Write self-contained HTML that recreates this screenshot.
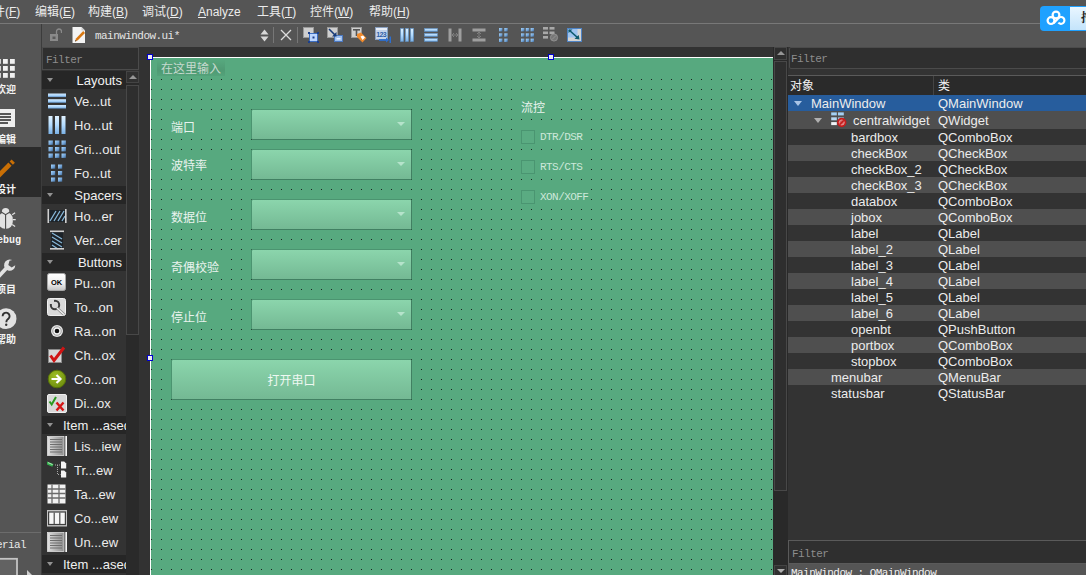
<!DOCTYPE html>
<html lang="zh-CN">
<head>
<meta charset="utf-8">
<title>mainwindow.ui - Qt Creator</title>
<style>
*{box-sizing:border-box;margin:0;padding:0}
html,body{width:1086px;height:575px;overflow:hidden;background:#333}
body{position:relative;font-family:"Liberation Sans","Noto Sans CJK SC",sans-serif;font-size:12px;color:#e6e6e6}
.abs{position:absolute}
.mono{font-family:"Liberation Mono","Noto Sans CJK SC",monospace}
/* menu bar */
#menubar{left:0;top:0;width:1086px;height:23px;background:#555555}
#menubar span{position:absolute;top:4px;font-size:12px;line-height:16px;color:#ececec;white-space:nowrap}
#menubar u{text-decoration:underline;text-underline-offset:1px}
#tbline{left:0;top:23px;width:1086px;height:1px;background:#787878}
#toolbar{left:0;top:24px;width:1086px;height:23px;background:#555555}
#tbbottom{left:0;top:47px;width:1086px;height:1px;background:#2f2f2f}
#tbsep0{left:41px;top:24px;width:1px;height:552px;background:#3c3c3c}
.tsep{top:27px;width:1px;height:16px;background:#777}
#fname{left:95px;top:30px;font-size:11px;letter-spacing:-0.55px;color:#e4e4e4;line-height:12px;white-space:nowrap}
#badge{left:1040px;top:6px;width:60px;height:25px;background:#1fa1ff;border-radius:4px 0 0 4px}
#badge2{left:30px;top:1px;width:40px;height:23px;background:linear-gradient(#e9f6ff,#c4e4fb)}
#badge2 span{position:absolute;left:11px;top:4px;font-size:12px;font-weight:bold;color:#222;line-height:14px;white-space:nowrap;font-family:"Liberation Serif","Noto Serif CJK SC",serif}
#modebar{left:0;top:24px;width:41px;height:551px;background:#555555}
#modeactive{left:0;top:147px;width:41px;height:50px;background:#2b2b2b}
.mlabel{position:absolute;left:-29px;width:70px;text-align:center;font-size:10px;font-weight:bold;color:#f4f4f4;line-height:12px;white-space:nowrap}
/* widget box */
#wbox{left:42px;top:47px;width:97px;height:528px;background:#333333}
#wfilter{left:42px;top:47px;width:97px;height:23px;background:#2f2f2f;border:1px solid #4b4b4b}
.filtertxt{font-size:11px;color:#8d8d8d;letter-spacing:-0.55px;line-height:12px;white-space:nowrap}
.whead{position:absolute;left:42px;width:84px;height:18px;background:#262626;color:#f0f0f0;font-size:13px;line-height:20px;text-align:right;padding-right:4px;white-space:nowrap;overflow:hidden}
.whead.wl{text-align:left;padding-left:21px;padding-right:0}
.whead i{position:absolute;left:5px;top:7px;width:0;height:0;border-left:3.5px solid transparent;border-right:3.5px solid transparent;border-top:4px solid #929292}
.witem{position:absolute;left:74px;width:52px;height:24px;line-height:26px;font-size:13px;color:#ececec;white-space:nowrap;overflow:hidden}
.wico{position:absolute;left:47px;width:20px;height:20px}
#wsb{left:126px;top:71px;width:13px;height:504px;background:#2a2a2a}
#wsbup{left:126px;top:71px;width:13px;height:12px;background:#303030;border:1px solid #444}
#wsbup i,#csbup i{position:absolute;left:1.5px;top:3px;width:0;height:0;border-left:4px solid transparent;border-right:4px solid transparent;border-bottom:4px solid #969696}
#wsbh{left:126px;top:85px;width:13px;height:250px;background:#2e2e2e;border:1px solid #484848}
/* canvas */
#canvasbg{left:139px;top:47px;width:649px;height:528px;background:#323232}
#canvas{left:150px;top:57px;width:623px;height:518px;background:#57a97f;border-left:1px solid #fff;border-top:1px solid #fff}
#typehere{left:157px;top:59px;width:68px;height:17px;background:linear-gradient(rgba(0,0,0,0),rgba(0,0,0,0.09) 65%,rgba(0,0,0,0.04))}
.flabel{position:absolute;font-size:12px;color:#e9f3ee;line-height:14px;white-space:nowrap}
.combo{position:absolute;left:251px;width:161px;height:31px;border:1px solid #4b9470;border-right-color:#418062;border-bottom-color:#418062;border-radius:2px;background:linear-gradient(#8bd5ac,#74b994)}
.combo i{position:absolute;right:6px;top:12px;width:0;height:0;border-left:4px solid transparent;border-right:4px solid transparent;border-top:4px solid #b5e3cb}
#openbt span{position:absolute;left:0;width:100%;top:14px;text-align:center;font-size:12px;line-height:14px;color:#eef8f2}
.chk{position:absolute;left:521px;width:14px;height:14px;border:1px solid #4a9571;background:#5aab82}
.opq{position:absolute;background:#57a97f}
.chkt{position:absolute;left:540px;font-size:11px;letter-spacing:-0.55px;color:#cde8da;line-height:12px;white-space:nowrap}
.handle{position:absolute;width:6px;height:6px;background:#ececec;border:1px solid #0000d0}
#csb{left:773px;top:47px;width:15px;height:528px;background:#292929}
#csbup{left:774px;top:47px;width:13px;height:13px;background:#2e2e2e;border:1px solid #464646}
#csbh{left:774px;top:61px;width:13px;height:430px;background:#2e2e2e;border:1px solid #484848}
#csbdn{left:774px;top:565px;width:13px;height:12px;background:#303030;border:1px solid #444}
#csbdn i{position:absolute;left:2px;top:3px;width:0;height:0;border-left:4px solid transparent;border-right:4px solid transparent;border-top:4px solid #b0b0b0}
/* right */
#rpanel{left:788px;top:47px;width:298px;height:528px;background:#333333}
#rfilter{left:789px;top:47px;width:300px;height:22px;background:#2f2f2f;border:1px solid #4b4b4b;border-radius:2px}
#rline{left:788px;top:75px;width:298px;height:1px;background:#5a5a5a}
#rhead{left:788px;top:76px;width:298px;height:19px;background:#2a2a2a}
#rhead span{position:absolute;top:3px;font-size:12px;line-height:14px;color:#f2f2f2}
#rhead em{position:absolute;left:145px;top:0;width:1px;height:19px;background:#444}
.orow{position:absolute;left:788px;width:298px;height:16px;font-size:13px;line-height:16px;color:#ececec;white-space:nowrap}
.orow b{position:absolute;font-weight:normal;top:1px}
.orow .c2{left:150px}
.orow .tri{position:absolute;top:6px;width:0;height:0;border-left:4px solid transparent;border-right:4px solid transparent;border-top:5px solid #a9c4e6}
.alt{background:#4f4f4f}
.sel{background:#275d9d}
#rfilter2{left:788px;top:540px;width:300px;height:24px;background:#2f2f2f;border:1px solid #5a5a5a}
#rprop{left:788px;top:564px;width:298px;height:11px;background:#555;font-size:11px;letter-spacing:-0.55px;color:#f0f0f0;line-height:12px;padding:3px 0 0 3px;white-space:nowrap;overflow:hidden}
</style>
</head>
<body>
<svg width="0" height="0" style="position:absolute"><defs>
<linearGradient id="gbv" x1="0" y1="0" x2="0" y2="1"><stop offset="0" stop-color="#e0f2ff"/><stop offset="0.5" stop-color="#b4dcff"/><stop offset="1" stop-color="#7ab0e4"/></linearGradient>
<linearGradient id="gbh" x1="0" y1="0" x2="0" y2="1"><stop offset="0" stop-color="#cfe8ff"/><stop offset="0.6" stop-color="#a6d2fa"/><stop offset="1" stop-color="#5e8fc4"/></linearGradient>
<linearGradient id="glv" x1="0" y1="0" x2="1" y2="0"><stop offset="0" stop-color="#e2e2e2"/><stop offset="0.5" stop-color="#b4b4b4"/><stop offset="1" stop-color="#8e8e8e"/></linearGradient>
<linearGradient id="gok" x1="0" y1="0" x2="0" y2="1"><stop offset="0" stop-color="#ffffff"/><stop offset="0.6" stop-color="#ececec"/><stop offset="1" stop-color="#c2c2c2"/></linearGradient>
<radialGradient id="gcl" cx="0.4" cy="0.3" r="0.8"><stop offset="0" stop-color="#9cbc24"/><stop offset="1" stop-color="#6a8a0c"/></radialGradient>
<linearGradient id="gsq" x1="0" y1="0" x2="1" y2="1"><stop offset="0" stop-color="#a9d6fb"/><stop offset="0.6" stop-color="#6fa0d4"/><stop offset="1" stop-color="#3e6690"/></linearGradient>
<pattern id="dots" width="10" height="10" patternUnits="userSpaceOnUse"><rect x="0" y="0" width="1" height="1" fill="#1c211e"/></pattern>
</defs></svg>
<div id="menubar" class="abs">
<span style="left:-19px">文件(<u>F</u>)</span>
<span style="left:35px">编辑(<u>E</u>)</span>
<span style="left:88px">构建(<u>B</u>)</span>
<span style="left:142px">调试(<u>D</u>)</span>
<span style="left:198px"><u>A</u>nalyze</span>
<span style="left:257px">工具(<u>T</u>)</span>
<span style="left:310px">控件(<u>W</u>)</span>
<span style="left:369px">帮助(<u>H</u>)</span>
</div>
<div id="tbline" class="abs"></div>
<div id="toolbar" class="abs"></div>
<div id="tbbottom" class="abs"></div>
<div class="abs" id="badge"><svg class="abs" style="left:6px;top:4px" width="20" height="16" viewBox="0 0 20 16"><g fill="none" stroke="#fff" stroke-width="2.2"><circle cx="10" cy="5" r="3.4"/><circle cx="5" cy="10.6" r="3.4"/><path d="M12.4 12.6a3.4 3.4 0 1 0 0.2-4.6"/><path d="M7.6 13.2 L13 7.4"/></g></svg><div class="abs" id="badge2"><span>拖拽上传</span></div></div>
<div class="abs" id="tbsep0"></div>
<svg class="abs" style="left:48px;top:27px" width="14" height="16" viewBox="0 0 14 16"><rect x="2" y="7" width="8" height="7" fill="#8a8a8a"/><rect x="4.5" y="9.5" width="3" height="2.5" fill="#5a5a5a"/><path d="M8.5 7V4.5a2.5 2.5 0 0 1 5 0V6" fill="none" stroke="#8a8a8a" stroke-width="1.3"/></svg>
<svg class="abs" style="left:71px;top:26px" width="16" height="18" viewBox="0 0 16 18"><path d="M1.5 1h9l3.5 3.5V17h-12.5z" fill="#f4f4f4"/><path d="M10.5 1v3.5H14z" fill="#cfcfcf"/><path d="M4 15.5l1-3 7.2-7.4 1.8 1.8-7.2 7.4z" fill="#d87812"/><path d="M4 15.5l0.5-1.6 1.1 1.1z" fill="#333"/></svg>
<div class="abs mono" id="fname">mainwindow.ui*</div>
<svg class="abs" style="left:260px;top:29px" width="9" height="13" viewBox="0 0 9 13"><path d="M0.5 5.5L4.5 0.5L8.5 5.5z M0.5 7.5L4.5 12.5L8.5 7.5z" fill="#d8d8d8"/></svg>
<div class="abs tsep" style="left:273px"></div>
<svg class="abs" style="left:280px;top:29px" width="12" height="12" viewBox="0 0 12 12"><path d="M1 1L11 11M11 1L1 11" stroke="#dcdcdc" stroke-width="1.3" fill="none"/></svg>
<div class="abs tsep" style="left:297px"></div>
<svg class="abs" style="left:303px;top:27px" width="16" height="16" viewBox="0 0 16 16"><rect x="0.5" y="0.5" width="10" height="10" fill="#cfcfcf" stroke="#9a9a9a"/><rect x="6.5" y="6.5" width="8" height="8" fill="#bcd6ff" stroke="#3d6fc2"/><rect x="9.5" y="9.5" width="2" height="2" fill="#1c3f8a"/><rect x="5" y="5" width="2" height="2" fill="#1c3f8a"/><rect x="14" y="5" width="2" height="2" fill="#1c3f8a"/><rect x="5" y="14" width="2" height="2" fill="#1c3f8a"/><rect x="14" y="14" width="2" height="2" fill="#1c3f8a"/></svg>
<svg class="abs" style="left:327px;top:27px" width="16" height="16" viewBox="0 0 16 16"><rect x="0.5" y="0.5" width="10" height="10" fill="#cfcfcf" stroke="#9a9a9a"/><rect x="7.5" y="8.5" width="8" height="6" fill="#9fc0ee" stroke="#4b78c0"/><path d="M2 2L8 8" stroke="#173a78" stroke-width="1.6"/><path d="M9.5 5v4.5H5z" fill="#173a78"/><rect x="9.5" y="11" width="4" height="1.5" fill="#e8f0ff"/></svg>
<svg class="abs" style="left:351px;top:27px" width="16" height="16" viewBox="0 0 16 16"><rect x="0.5" y="0.5" width="10" height="10" fill="#cfcfcf" stroke="#9a9a9a"/><rect x="2" y="2" width="7" height="1.6" fill="#555"/><rect x="4.7" y="2" width="1.6" height="7" fill="#555"/><path d="M6 7l4-1.5 5.5 5.5-4 4.5-5.5-5.5z" fill="#f08a2c"/><path d="M9.5 9.5l2.5-1 2 2-2.5 2.5z" fill="#fff"/></svg>
<svg class="abs" style="left:375px;top:27px" width="17" height="16" viewBox="0 0 17 16"><rect x="0.5" y="0.5" width="12" height="12" fill="#c4d4ea" stroke="#8aa0c0"/><rect x="1" y="1" width="11" height="2" fill="#e8eef8"/><text x="1.2" y="10" font-family="Liberation Sans,sans-serif" font-size="7" fill="#2d5fa8" font-weight="bold" letter-spacing="-0.6">123</text><path d="M4 13h8.5" stroke="#2d6fd0" stroke-width="1.8"/><path d="M11 10.5l3 2.5-3 2.5z" fill="#2d6fd0"/><rect x="14.5" y="9.5" width="1.5" height="6.5" fill="#2d6fd0"/></svg>
<svg class="abs" style="left:400px;top:28px" width="14" height="14" viewBox="0 0 14 14"><rect x="0.5" y="0.5" width="3" height="13" fill="url(#gbv)" stroke="#5f93c8" stroke-width="0.6"/><rect x="5.5" y="0.5" width="3" height="13" fill="url(#gbv)" stroke="#5f93c8" stroke-width="0.6"/><rect x="10.5" y="0.5" width="3" height="13" fill="url(#gbv)" stroke="#5f93c8" stroke-width="0.6"/></svg>
<svg class="abs" style="left:424px;top:28px" width="14" height="14" viewBox="0 0 14 14"><rect x="0.5" y="0.5" width="13" height="3" fill="url(#gbh)" stroke="#5f93c8" stroke-width="0.6"/><rect x="0.5" y="5.5" width="13" height="3" fill="url(#gbh)" stroke="#5f93c8" stroke-width="0.6"/><rect x="0.5" y="10.5" width="13" height="3" fill="url(#gbh)" stroke="#5f93c8" stroke-width="0.6"/></svg>
<svg class="abs" style="left:448px;top:28px" width="14" height="14" viewBox="0 0 14 14"><rect x="0.5" y="0.5" width="3" height="13" fill="#9e9e9e"/><rect x="10.5" y="0.5" width="3" height="13" fill="#9e9e9e"/><path d="M4 7h6M4 7l2-2M4 7l2 2M10 7l-2-2M10 7l-2 2" stroke="#808080" stroke-width="1" fill="none"/></svg>
<svg class="abs" style="left:472px;top:28px" width="14" height="14" viewBox="0 0 14 14"><rect x="0.5" y="0.5" width="13" height="3" fill="#9e9e9e"/><rect x="0.5" y="10.5" width="13" height="3" fill="#9e9e9e"/><path d="M7 4v6M7 4l-2 2M7 4l2 2M7 10l-2-2M7 10l2-2" stroke="#808080" stroke-width="1" fill="none"/></svg>
<svg class="abs" style="left:499px;top:28px" width="9" height="14" viewBox="0 0 9 14"><rect x="0" y="0" width="3.4" height="3.4" fill="url(#gsq)"/><rect x="0" y="5.3" width="3.4" height="3.4" fill="url(#gsq)"/><rect x="0" y="10.6" width="3.4" height="3.4" fill="url(#gsq)"/><rect x="5.3" y="0" width="3.4" height="3.4" fill="url(#gsq)"/><rect x="5.3" y="5.3" width="3.4" height="3.4" fill="url(#gsq)"/><rect x="5.3" y="10.6" width="3.4" height="3.4" fill="url(#gsq)"/></svg>
<svg class="abs" style="left:521px;top:28px" width="13" height="14" viewBox="0 0 13 14"><rect x="0" y="0" width="3.4" height="3.4" fill="url(#gsq)"/><rect x="0" y="5.3" width="3.4" height="3.4" fill="url(#gsq)"/><rect x="0" y="10.6" width="3.4" height="3.4" fill="url(#gsq)"/><rect x="4.8" y="0" width="3.4" height="3.4" fill="url(#gsq)"/><rect x="4.8" y="5.3" width="3.4" height="3.4" fill="url(#gsq)"/><rect x="4.8" y="10.6" width="3.4" height="3.4" fill="url(#gsq)"/><rect x="9.6" y="0" width="3.4" height="3.4" fill="url(#gsq)"/><rect x="9.6" y="5.3" width="3.4" height="3.4" fill="url(#gsq)"/><rect x="9.6" y="10.6" width="3.4" height="3.4" fill="url(#gsq)"/></svg>
<svg class="abs" style="left:543px;top:27px" width="16" height="15" viewBox="0 0 16 15"><rect x="0" y="0" width="5" height="2.6" fill="#a8a8a8"/><rect x="6.5" y="0" width="5" height="2.6" fill="#a8a8a8"/><rect x="0" y="4.5" width="5" height="2.6" fill="#a8a8a8"/><rect x="6.5" y="4.5" width="5" height="2.6" fill="#a8a8a8"/><rect x="0" y="9" width="5" height="2.6" fill="#a8a8a8"/><circle cx="11" cy="10.5" r="3.6" fill="#777" stroke="#999" stroke-width="0.8"/><path d="M8.8 12.7l4.4-4.4" stroke="#999" stroke-width="0.8"/></svg>
<svg class="abs" style="left:567px;top:28px" width="15" height="14" viewBox="0 0 15 14"><rect x="0.5" y="0.5" width="14" height="13" fill="#9fc4ef" stroke="#4f83c4"/><rect x="1" y="9.5" width="13" height="3.5" fill="#d4d4d4"/><rect x="10.5" y="1" width="3.5" height="12" fill="#d4d4d4"/><path d="M2 2l9 8" stroke="#0e5a6e" stroke-width="1.6"/><path d="M12.5 11.5l-5-0.8 4.2-3.8z" fill="#0e5a6e"/><path d="M1.5 1.5h4l-4 3.6z" fill="#0e5a6e"/></svg>
<div id="modebar" class="abs"></div><div id="modeactive" class="abs"></div>
<svg class="abs" style="left:0;top:58px;overflow:hidden" width="18" height="20" viewBox="0 0 18 20"><rect x="-4" y="1" width="4.8" height="4.8" fill="#efefef"/><rect x="-4" y="8" width="4.8" height="4.8" fill="#efefef"/><rect x="-4" y="15" width="4.8" height="4.8" fill="#efefef"/><rect x="3" y="1" width="4.8" height="4.8" fill="#efefef"/><rect x="3" y="8" width="4.8" height="4.8" fill="#efefef"/><rect x="3" y="15" width="4.8" height="4.8" fill="#efefef"/><rect x="10" y="1" width="4.8" height="4.8" fill="#efefef"/><rect x="10" y="8" width="4.8" height="4.8" fill="#efefef"/><rect x="10" y="15" width="4.8" height="4.8" fill="#efefef"/></svg>
<div class="mlabel" style="top:84px">欢迎</div>
<svg class="abs" style="left:0;top:109px" width="16" height="19" viewBox="0 0 16 19"><rect x="-6" y="0" width="21" height="18" fill="#eeeeee"/><path d="M-3 5h14M-3 8h14M-3 11h14M-3 14h11" stroke="#262626" stroke-width="1.4"/></svg>
<div class="mlabel" style="top:134px">编辑</div>
<svg class="abs" style="left:0;top:158px" width="18" height="22" viewBox="0 0 18 22"><path d="M-1 14L8.4 4.6L11.65 7.85L-1 20.5z" fill="#c96f05"/><path d="M9.6 3.4L11.6 1.4L14.85 4.65L12.85 6.65z" fill="#c96f05"/></svg>
<div class="mlabel" style="top:184px">设计</div>
<svg class="abs" style="left:0;top:205px" width="18" height="25" viewBox="0 0 18 25"><circle cx="5.6" cy="6.8" r="3.7" fill="#e2e2e2"/><rect x="-1.6" y="7.3" width="14.4" height="16.4" rx="6.5" ry="7" fill="#e2e2e2"/><path d="M1.2 7L5.6 9.6L10 7M5.6 9.6V24" stroke="#4a4a4a" stroke-width="1.1" fill="none"/><path d="M12.2 9.8l2.9-2M12.7 14.6h3M12.2 19.4l2.9 2" stroke="#e2e2e2" stroke-width="1.2" fill="none"/></svg>
<div class="mlabel mono" style="top:235px;font-size:10px">Debug</div>
<svg class="abs" style="left:0;top:257px" width="18" height="24" viewBox="0 0 18 24"><path d="M-2 20L7 10.5" stroke="#e2e2e2" stroke-width="3.8" stroke-linecap="butt"/><path d="M12.2 3.1a5.6 5.6 0 1 0 3.1 5.2l-3.6 2.2-3.4-2.6 1.2-4.2z" fill="#e2e2e2"/></svg>
<div class="mlabel" style="top:284px">项目</div>
<svg class="abs" style="left:0;top:307px" width="18" height="24" viewBox="0 0 18 24"><circle cx="6.1" cy="11.7" r="10.4" fill="#e2e2e2"/><path d="M2.6 9.2a3.5 3.5 0 1 1 5.4 2.9c-1.2 0.9-1.7 1.5-1.7 3.1" fill="none" stroke="#333" stroke-width="1.9"/><circle cx="6.2" cy="17.7" r="1.2" fill="#333"/></svg>
<div class="mlabel" style="top:334px">帮助</div>
<div class="abs mono" style="left:-10px;top:539px;font-size:11px;letter-spacing:-0.6px;color:#e8e8e8;line-height:12px;white-space:nowrap">serial</div>
<div class="abs" style="left:0;top:532px;width:41px;height:1px;background:#6c6c6c"></div><svg class="abs" style="left:0;top:556px" width="36" height="19" viewBox="0 0 36 19"><rect x="-6" y="2.8" width="23" height="20" fill="#626262" stroke="#c4c4c4" stroke-width="1.8"/><path d="M27 14l5 5-5 5z" fill="#cfcfcf"/></svg>
<div id="wbox" class="abs"></div><div id="wfilter" class="abs"><span class="mono filtertxt abs" style="left:3px;top:6px">Filter</span></div>
<div class="abs" id="wsb"></div><div class="abs" id="wsbup"><i></i></div><div class="abs" id="wsbh"></div>
<div class="whead" style="top:71px"><i></i>Layouts</div>
<div class="whead" style="top:186px"><i></i>Spacers</div>
<div class="whead" style="top:253px"><i></i>Buttons</div>
<div class="whead wl" style="top:416px"><i></i>Item ...ased</div>
<div class="whead wl" style="top:555px"><i></i>Item ...ased</div>
<svg class="wico" style="top:91px" viewBox="0 0 20 20"><rect x="1" y="2.5" width="18" height="3.6" fill="url(#gbh)"/><rect x="1" y="8.2" width="18" height="3.6" fill="url(#gbh)"/><rect x="1" y="14" width="18" height="3.6" fill="url(#gbh)"/></svg><div class="witem" style="top:89px">Ve...ut</div>
<svg class="wico" style="top:115px" viewBox="0 0 20 20"><rect x="1.5" y="1" width="4" height="18" fill="url(#gbv)"/><rect x="8" y="1" width="4" height="18" fill="url(#gbv)"/><rect x="14.5" y="1" width="4" height="18" fill="url(#gbv)"/></svg><div class="witem" style="top:113px">Ho...ut</div>
<svg class="wico" style="top:139px" viewBox="0 0 20 20"><rect x="1.5" y="1.5" width="4.4" height="4.4" fill="url(#gsq)"/><rect x="1.5" y="8" width="4.4" height="4.4" fill="url(#gsq)"/><rect x="1.5" y="14.5" width="4.4" height="4.4" fill="url(#gsq)"/><rect x="8" y="1.5" width="4.4" height="4.4" fill="url(#gsq)"/><rect x="8" y="8" width="4.4" height="4.4" fill="url(#gsq)"/><rect x="8" y="14.5" width="4.4" height="4.4" fill="url(#gsq)"/><rect x="14.5" y="1.5" width="4.4" height="4.4" fill="url(#gsq)"/><rect x="14.5" y="8" width="4.4" height="4.4" fill="url(#gsq)"/><rect x="14.5" y="14.5" width="4.4" height="4.4" fill="url(#gsq)"/></svg><div class="witem" style="top:137px">Gri...out</div>
<svg class="wico" style="top:163px" viewBox="0 0 20 20"><rect x="4" y="1.5" width="4.2" height="4.2" fill="url(#gsq)"/><rect x="4" y="8" width="4.2" height="4.2" fill="url(#gsq)"/><rect x="4" y="14.5" width="4.2" height="4.2" fill="url(#gsq)"/><rect x="11" y="1.5" width="4.2" height="4.2" fill="url(#gsq)"/><rect x="11" y="8" width="4.2" height="4.2" fill="url(#gsq)"/><rect x="11" y="14.5" width="4.2" height="4.2" fill="url(#gsq)"/></svg><div class="witem" style="top:161px">Fo...ut</div>
<svg class="wico" style="top:206px" viewBox="0 0 20 20"><rect x="1" y="4" width="18" height="12" fill="#1c2228"/><path d="M3 15l6-10M7 15l6-10M11 15l6-10M15 15l3-5" stroke="#86b6d8" stroke-width="1.3"/><rect x="0.5" y="3" width="1.6" height="14" fill="#cfcfcf"/><rect x="18" y="3" width="1.6" height="14" fill="#cfcfcf"/></svg><div class="witem" style="top:204px">Ho...er</div>
<svg class="wico" style="top:230px" viewBox="0 0 20 20"><rect x="4" y="1" width="12" height="18" fill="#1c2228"/><path d="M5 3l10 6M5 7l10 6M5 11l10 6M5 15l6 4" stroke="#86b6d8" stroke-width="1.3"/><rect x="3" y="0.5" width="14" height="1.6" fill="#cfcfcf"/><rect x="3" y="18" width="14" height="1.6" fill="#cfcfcf"/></svg><div class="witem" style="top:228px">Ver...cer</div>
<svg class="wico" style="top:273px" viewBox="0 0 20 20"><rect x="0.5" y="0.5" width="18" height="17" rx="2" fill="url(#gok)" stroke="#a6a6a6"/><text x="9.5" y="12" text-anchor="middle" font-family="Liberation Sans,sans-serif" font-size="7.5" font-weight="bold" fill="#000">OK</text></svg><div class="witem" style="top:271px">Pu...on</div>
<svg class="wico" style="top:297px" viewBox="0 0 20 20"><rect x="0.5" y="1.5" width="18" height="17" rx="2" fill="#d9d9d9" stroke="#efefef"/><circle cx="8" cy="8" r="4.2" fill="none" stroke="#3c3c3c" stroke-width="2"/><rect x="2" y="2" width="5" height="5" fill="#d9d9d9"/><path d="M10 11l7 6.5" stroke="#8c8c8c" stroke-width="3"/><path d="M10 11l7 6.5" stroke="#f4f4f4" stroke-width="1.2"/></svg><div class="witem" style="top:295px">To...on</div>
<svg class="wico" style="top:321px" viewBox="0 0 20 20"><circle cx="10" cy="10" r="6" fill="#e4e4e4"/><circle cx="10" cy="10" r="4.2" fill="#f8f8f8" stroke="#888" stroke-width="0.8"/><circle cx="10" cy="10" r="2.3" fill="#111"/></svg><div class="witem" style="top:319px">Ra...on</div>
<svg class="wico" style="top:345px" viewBox="0 0 20 20"><rect x="1.5" y="4.5" width="13" height="13" fill="#d6d6d6" stroke="#8a8a8a"/><path d="M3.5 10.5l3.5 5L17 2.5" stroke="#d01414" stroke-width="3" fill="none"/></svg><div class="witem" style="top:343px">Ch...ox</div>
<svg class="wico" style="top:369px" viewBox="0 0 20 20"><circle cx="10" cy="10" r="8.8" fill="url(#gcl)" stroke="#56700a"/><path d="M4.5 10h8M9.5 6l4 4-4 4" stroke="#fff" stroke-width="2.2" fill="none"/></svg><div class="witem" style="top:367px">Co...on</div>
<svg class="wico" style="top:393px" viewBox="0 0 20 20"><rect x="0.5" y="1.5" width="19" height="18" rx="1.5" fill="#d8d8d8" stroke="#efefef"/><path d="M2.5 8.5l2.2 3L9 4" stroke="#2a9a1e" stroke-width="2" fill="none"/><path d="M9.5 9.5l7 8M16.5 9.5l-7 8" stroke="#d61616" stroke-width="2.4"/></svg><div class="witem" style="top:391px">Di...ox</div>
<svg class="wico" style="top:436px" viewBox="0 0 20 20"><rect x="0.5" y="0.5" width="16.5" height="19" fill="url(#glv)" stroke="#dcdcdc" stroke-width="0.8"/><path d="M3 3.5h12M3 6h12M3 8.5h12M3 11h12M3 13.5h12M3 16h12" stroke="#6e6e6e" stroke-width="1"/><rect x="18.3" y="0" width="2" height="20" fill="#f6f6f6"/></svg><div class="witem" style="top:434px">Lis...iew</div>
<svg class="wico" style="top:460px" viewBox="0 0 20 20"><path d="M0 1.5l6.5 2.6-1.2 2.6-5.3-2.2z" fill="#35b04e"/><path d="M1 2.6l4.6 2" stroke="#d8f2dc" stroke-width="0.8"/><path d="M8 5h5M10.5 5v9.5h3" stroke="#a8a8a8" stroke-width="1" stroke-dasharray="1 1" fill="none"/><path d="M14 1.5h3.2l2 2V8.5h-5.2z" fill="#f4f4f4"/><path d="M14 10.5h3.2l2 2v5h-5.2z" fill="#f4f4f4"/></svg><div class="witem" style="top:458px">Tr...ew</div>
<svg class="wico" style="top:484px" viewBox="0 0 20 20"><rect x="0.5" y="0.5" width="18" height="19" fill="#f2f2f2"/><path d="M0.5 5h18M0.5 9.5h18M0.5 14h18M5 0.5v19M12 0.5v19" stroke="#6c6c6c" stroke-width="1.3"/></svg><div class="witem" style="top:482px">Ta...ew</div>
<svg class="wico" style="top:508px" viewBox="0 0 20 20"><rect x="0" y="2" width="20" height="16.5" fill="#c4c4c4"/><rect x="1.6" y="4" width="16.8" height="12.5" fill="#f6f6f6" stroke="#3e3e3e" stroke-width="1.2"/><path d="M7.2 4.5v11.5M12.8 4.5v11.5" stroke="#4a4a4a" stroke-width="1.2"/></svg><div class="witem" style="top:506px">Co...ew</div>
<svg class="wico" style="top:532px" viewBox="0 0 20 20"><rect x="0.5" y="0.5" width="16.5" height="19" fill="url(#glv)" stroke="#dcdcdc" stroke-width="0.8"/><path d="M3 3.5h12M3 6h12M3 8.5h12M3 11h12M3 13.5h12M3 16h12" stroke="#6e6e6e" stroke-width="1"/><rect x="18.3" y="0" width="2" height="20" fill="#f6f6f6"/></svg><div class="witem" style="top:530px">Un...ew</div>
<div id="canvasbg" class="abs"></div><div id="canvas" class="abs"></div>
<svg class="abs" style="left:151px;top:79px" width="622" height="496"><rect width="622" height="496" fill="url(#dots)"/></svg>
<div class="abs" id="typehere"></div><div class="flabel" style="left:161px;top:62px;color:#c6dacf">在这里输入</div>
<div class="opq" style="left:171px;top:113px;width:36px;height:25px"></div><div class="flabel" style="left:171px;top:121px">端口</div>
<div class="opq" style="left:171px;top:151px;width:56px;height:25px"></div><div class="flabel" style="left:171px;top:159px">波特率</div>
<div class="opq" style="left:171px;top:203px;width:56px;height:25px"></div><div class="flabel" style="left:171px;top:211px">数据位</div>
<div class="opq" style="left:171px;top:253px;width:56px;height:25px"></div><div class="flabel" style="left:171px;top:261px">奇偶校验</div>
<div class="opq" style="left:171px;top:303px;width:56px;height:25px"></div><div class="flabel" style="left:171px;top:311px">停止位</div>
<div class="combo" style="top:109px"><i></i></div>
<div class="combo" style="top:149px"><i></i></div>
<div class="combo" style="top:199px"><i></i></div>
<div class="combo" style="top:249px"><i></i></div>
<div class="combo" style="top:299px"><i></i></div>
<div class="combo" id="openbt" style="left:171px;top:359px;width:241px;height:41px"><span>打开串口</span></div>
<div class="opq" style="left:521px;top:95px;width:36px;height:20px"></div><div class="flabel" style="left:521px;top:101px">流控</div>
<div class="opq" style="left:521px;top:127px;width:68px;height:20px"></div><div class="chk" style="top:130px"></div><div class="chkt mono" style="top:131px">DTR/DSR</div>
<div class="opq" style="left:521px;top:157px;width:68px;height:20px"></div><div class="chk" style="top:160px"></div><div class="chkt mono" style="top:161px">RTS/CTS</div>
<div class="opq" style="left:521px;top:187px;width:68px;height:20px"></div><div class="chk" style="top:190px"></div><div class="chkt mono" style="top:191px">XON/XOFF</div>
<div class="handle" style="left:147px;top:54px"></div><div class="handle" style="left:548px;top:54px"></div><div class="handle" style="left:147px;top:355px"></div>
<div class="abs" id="csb"></div><div class="abs" id="csbup"><i></i></div><div class="abs" id="csbh"></div><div class="abs" id="csbdn"><i></i></div>
<div id="rpanel" class="abs"></div>
<div class="abs" id="rfilter"><span class="mono filtertxt abs" style="left:1px;top:5px">Filter</span></div>
<div class="abs" id="rline"></div><div class="abs" id="rhead"><span style="left:2px">对象</span><span style="left:150px">类</span><em></em></div>
<div class="orow sel" style="top:95px;height:16px;line-height:16px"><i class="tri" style="left:6px"></i><b style="left:23px">MainWindow</b><b class="c2">QMainWindow</b></div>
<div class="orow alt" style="top:111px;height:18px;line-height:18px"><i class="tri" style="left:26px;top:7px;border-top-color:#b0b0b0"></i><svg class="abs" style="left:43px;top:1px" width="16" height="16" viewBox="0 0 16 16"><rect x="0.2" y="0.4" width="5.6" height="3" fill="#a4d0f4"/><rect x="7" y="0.4" width="5.8" height="3" fill="#a4d0f4"/><rect x="0.2" y="5.3" width="5.6" height="3" fill="#b8d8f2"/><rect x="7" y="5.3" width="5.8" height="3" fill="#9cbcd8"/><rect x="0.2" y="10.1" width="5.6" height="3" fill="#f0f4f8"/><circle cx="10.7" cy="10.5" r="4.7" fill="#c61c1c"/><circle cx="10.7" cy="10.5" r="2.6" fill="#d86a6a" stroke="#f0c8c8" stroke-width="0.5"/><path d="M8.6 12.6l4.2-4.2" stroke="#c61c1c" stroke-width="1.5"/></svg><b style="left:65px">centralwidget</b><b class="c2">QWidget</b></div>
<div class="orow" style="top:129px;height:16px;line-height:16px"><b style="left:63px">bardbox</b><b class="c2">QComboBox</b></div>
<div class="orow alt" style="top:145px;height:16px;line-height:16px"><b style="left:63px">checkBox</b><b class="c2">QCheckBox</b></div>
<div class="orow" style="top:161px;height:16px;line-height:16px"><b style="left:63px">checkBox_2</b><b class="c2">QCheckBox</b></div>
<div class="orow alt" style="top:177px;height:16px;line-height:16px"><b style="left:63px">checkBox_3</b><b class="c2">QCheckBox</b></div>
<div class="orow" style="top:193px;height:16px;line-height:16px"><b style="left:63px">databox</b><b class="c2">QComboBox</b></div>
<div class="orow alt" style="top:209px;height:16px;line-height:16px"><b style="left:63px">jobox</b><b class="c2">QComboBox</b></div>
<div class="orow" style="top:225px;height:16px;line-height:16px"><b style="left:63px">label</b><b class="c2">QLabel</b></div>
<div class="orow alt" style="top:241px;height:16px;line-height:16px"><b style="left:63px">label_2</b><b class="c2">QLabel</b></div>
<div class="orow" style="top:257px;height:16px;line-height:16px"><b style="left:63px">label_3</b><b class="c2">QLabel</b></div>
<div class="orow alt" style="top:273px;height:16px;line-height:16px"><b style="left:63px">label_4</b><b class="c2">QLabel</b></div>
<div class="orow" style="top:289px;height:16px;line-height:16px"><b style="left:63px">label_5</b><b class="c2">QLabel</b></div>
<div class="orow alt" style="top:305px;height:16px;line-height:16px"><b style="left:63px">label_6</b><b class="c2">QLabel</b></div>
<div class="orow" style="top:321px;height:16px;line-height:16px"><b style="left:63px">openbt</b><b class="c2">QPushButton</b></div>
<div class="orow alt" style="top:337px;height:16px;line-height:16px"><b style="left:63px">portbox</b><b class="c2">QComboBox</b></div>
<div class="orow" style="top:353px;height:16px;line-height:16px"><b style="left:63px">stopbox</b><b class="c2">QComboBox</b></div>
<div class="orow alt" style="top:369px;height:16px;line-height:16px"><b style="left:43px">menubar</b><b class="c2">QMenuBar</b></div>
<div class="orow" style="top:385px;height:16px;line-height:16px"><b style="left:43px">statusbar</b><b class="c2">QStatusBar</b></div>
<div class="abs" id="rfilter2"><span class="mono filtertxt abs" style="left:3px;top:7px">Filter</span></div>
<div class="abs mono" id="rprop">MainWindow : QMainWindow</div>
</body>
</html>
